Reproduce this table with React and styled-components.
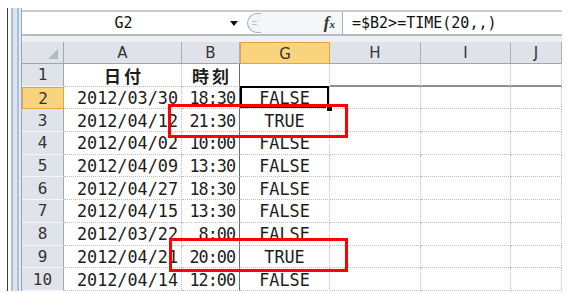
import React from 'react'
import styled, { createGlobalStyle, css } from 'styled-components'

const GlobalStyle = createGlobalStyle`
  html, body {
    margin: 0;
    background: #fff;
  }
  body {
    font-family: "DejaVu Sans", "Noto Sans CJK JP", sans-serif;
  }
`

const columns = [
  { key: 'A', width: 118 },
  { key: 'B', width: 58 },
  { key: 'G', width: 90, active: true },
  { key: 'H', width: 91 },
  { key: 'I', width: 90 },
  { key: 'J', width: 51 },
]

const rows = [
  ['2012/03/30', '18:30', 'FALSE'],
  ['2012/04/12', '21:30', 'TRUE'],
  ['2012/04/02', '10:00', 'FALSE'],
  ['2012/04/09', '13:30', 'FALSE'],
  ['2012/04/27', '18:30', 'FALSE'],
  ['2012/04/15', '13:30', 'FALSE'],
  ['2012/03/22', '8:00', 'FALSE'],
  ['2012/04/21', '20:00', 'TRUE'],
  ['2012/04/14', '12:00', 'FALSE'],
]

const Sheet = () => {
  return (
    <Page>
      <GlobalStyle />
      <Rail />
      <Main>
        <FormulaBar>
          <NameBox>G2</NameBox>
          <DropArrow><span /></DropArrow>
          <Nub><i /></Nub>
          <FxZone>
            <Fx>f<small>x</small></Fx>
          </FxZone>
          <FormulaInput>=$B2&gt;=TIME(20,,)</FormulaInput>
        </FormulaBar>
        <Gap />
        <Grid>
          <Corner>
            <svg width="10" height="10" viewBox="0 0 10 10">
              <polygon points="10,0 10,10 0,10" fill="#b3bac4" />
            </svg>
          </Corner>
          {columns.map(c => (
            <ColHead key={c.key} $active={c.active}>{c.key}</ColHead>
          ))}

          <RowHead>1</RowHead>
          <Cell $align="center" $bold>日付</Cell>
          <Cell $align="center" $bold $divider>時刻</Cell>
          <Cell />
          <Cell $heavyBottom />
          <Cell $heavyBottom />
          <Cell $heavyBottom />

          {rows.map((r, i) => (
            <React.Fragment key={i}>
              <RowHead $active={i === 0}>{i + 2}</RowHead>
              <Cell $align="right">{r[0]}</Cell>
              <Cell $align="right" $divider $tight>{r[1]}</Cell>
              <Cell $align="center" $selected={i === 0}>{r[2]}</Cell>
              <Cell />
              <Cell />
              <Cell />
            </React.Fragment>
          ))}
        </Grid>
      </Main>
      <Mark style={{ left: 168, top: 104, width: 180 }} />
      <Mark style={{ left: 169, top: 238, width: 179 }} />
    </Page>
  )
}

const Page = styled.div`
  position: relative;
  width: 567px;
  height: 294px;
  box-sizing: border-box;
  padding: 8px 5px 0 7px;
  display: flex;
  overflow: hidden;
`

const Rail = styled.div`
  width: 15px;
  height: 283px;
  box-sizing: border-box;
  border-left: 1px solid #3a3a3a;
  background: linear-gradient(
    to right,
    #fbfcfd 0 3px,
    #a9c0de 3px 5px,
    #dce4ee 5px 9px,
    #a9c0de 9px 11px,
    #e4e9f0 11px 13px,
    #9ea6b0 13px 14px
  );
`

const Main = styled.div`
  flex: 1;
  display: flex;
  flex-direction: column;
`

const FormulaBar = styled.div`
  margin-top: 2px;
  height: 26px;
  box-sizing: border-box;
  border-top: 2px solid #c8ccd2;
  border-bottom: 2px solid #b6bac1;
  display: flex;
  align-items: center;
  background: #fff;
`

const NameBox = styled.div`
  width: 203px;
  text-align: center;
  font-family: "DejaVu Sans Mono", monospace;
  font-size: 15px;
  color: #111;
`

const DropArrow = styled.div`
  width: 18px;
  display: flex;
  justify-content: center;
  span {
    width: 0;
    height: 0;
    border-left: 4px solid transparent;
    border-right: 4px solid transparent;
    border-top: 5px solid #111;
  }
`

const Nub = styled.div`
  margin-left: 4px;
  width: 14px;
  height: 20px;
  box-sizing: border-box;
  border: 1px solid #a8b0ba;
  border-right: none;
  border-radius: 11px 0 0 11px;
  background: #f1f3f6;
  display: flex;
  align-items: center;
  justify-content: center;
  i {
    width: 5px;
    height: 2px;
    border-top: 1px solid #b9bfc7;
    border-bottom: 1px solid #b9bfc7;
  }
`

const FxZone = styled.div`
  width: 81px;
  height: 100%;
  background: #f5f6f8;
  display: flex;
  align-items: center;
  justify-content: flex-end;
  padding-right: 7px;
  box-sizing: border-box;
`

const Fx = styled.span`
  font-family: "Liberation Serif", serif;
  font-style: italic;
  font-weight: bold;
  font-size: 17px;
  color: #333;
  small {
    font-size: 11px;
  }
`

const FormulaInput = styled.div`
  flex: 1;
  height: 100%;
  box-sizing: border-box;
  border-left: 1px solid #a6adb6;
  padding-left: 9px;
  display: flex;
  align-items: center;
  font-family: "DejaVu Sans Mono", monospace;
  font-size: 15px;
  color: #111;
  background: #fff;
`

const Gap = styled.div`
  height: 6px;
  background: #eef0f3;
`

const Grid = styled.div`
  display: grid;
  grid-template-columns: 42px ${columns.map(c => c.width + 'px').join(' ')};
  grid-template-rows: 22px repeat(10, 22.7px);
`

const headBase = css`
  box-sizing: border-box;
  background: #dfe3e9;
  display: flex;
  align-items: center;
  justify-content: center;
  color: #333;
`

const activeHead = css`
  background: #f8d47e;
  border: 1px solid #e8a33c;
`

const Corner = styled.div`
  ${headBase};
  border-right: 1px solid #9ea8b4;
  border-bottom: 1px solid #9ea8b4;
  justify-content: flex-end;
  align-items: flex-end;
  padding: 0 5px 4px 0;
`

const ColHead = styled.div`
  ${headBase};
  font-size: 15px;
  padding-top: 1px;
  border-right: 1px solid #a7b1bd;
  border-bottom: 1px solid #9ea8b4;
  ${p => p.$active && activeHead};
`

const RowHead = styled.div`
  ${headBase};
  font-family: "DejaVu Sans Mono", monospace;
  font-size: 16px;
  background: #e0e4ea;
  border-right: 1px solid #9ea8b4;
  border-bottom: 1px solid #f4f6f9;
  ${p => p.$active && activeHead};
`

const Cell = styled.div`
  position: relative;
  box-sizing: border-box;
  display: flex;
  align-items: center;
  justify-content: ${p => (p.$align === 'right' ? 'flex-end' : 'center')};
  padding: 1px 3px 0 3px;
  white-space: nowrap;
  font-family: "DejaVu Sans Mono", monospace;
  font-size: 16.8px;
  color: #1c1c1c;
  border-right: 1px dotted #bdbdbd;
  border-bottom: 1px dotted #bdbdbd;

  ${p => p.$tight && css`
    letter-spacing: -1px;
    padding-right: 4px;
  `}

  ${p => p.$bold && css`
    font-family: "Noto Sans CJK JP", sans-serif;
    font-weight: bold;
    font-size: 17px;
    letter-spacing: 3px;
    padding-left: 6px;
  `}

  ${p => p.$divider && css`
    border-right: 1px solid #6c6c6c;
  `}

  ${p => p.$heavyBottom && css`
    border-bottom: 2px solid #8e8e8e;
  `}

  ${p => p.$selected && css`
    &::after {
      content: '';
      position: absolute;
      top: -1px;
      left: 0;
      right: 0;
      bottom: 0;
      border: 2px solid #000;
    }
    &::before {
      content: '';
      position: absolute;
      right: -4px;
      bottom: -4px;
      width: 5px;
      height: 5px;
      background: #000;
      border: 1px solid #fff;
      z-index: 1;
    }
  `}
`

const Mark = styled.div`
  position: absolute;
  height: 34px;
  box-sizing: border-box;
  border: 3px solid #ff0000;
  z-index: 2;
`

export default Sheet
